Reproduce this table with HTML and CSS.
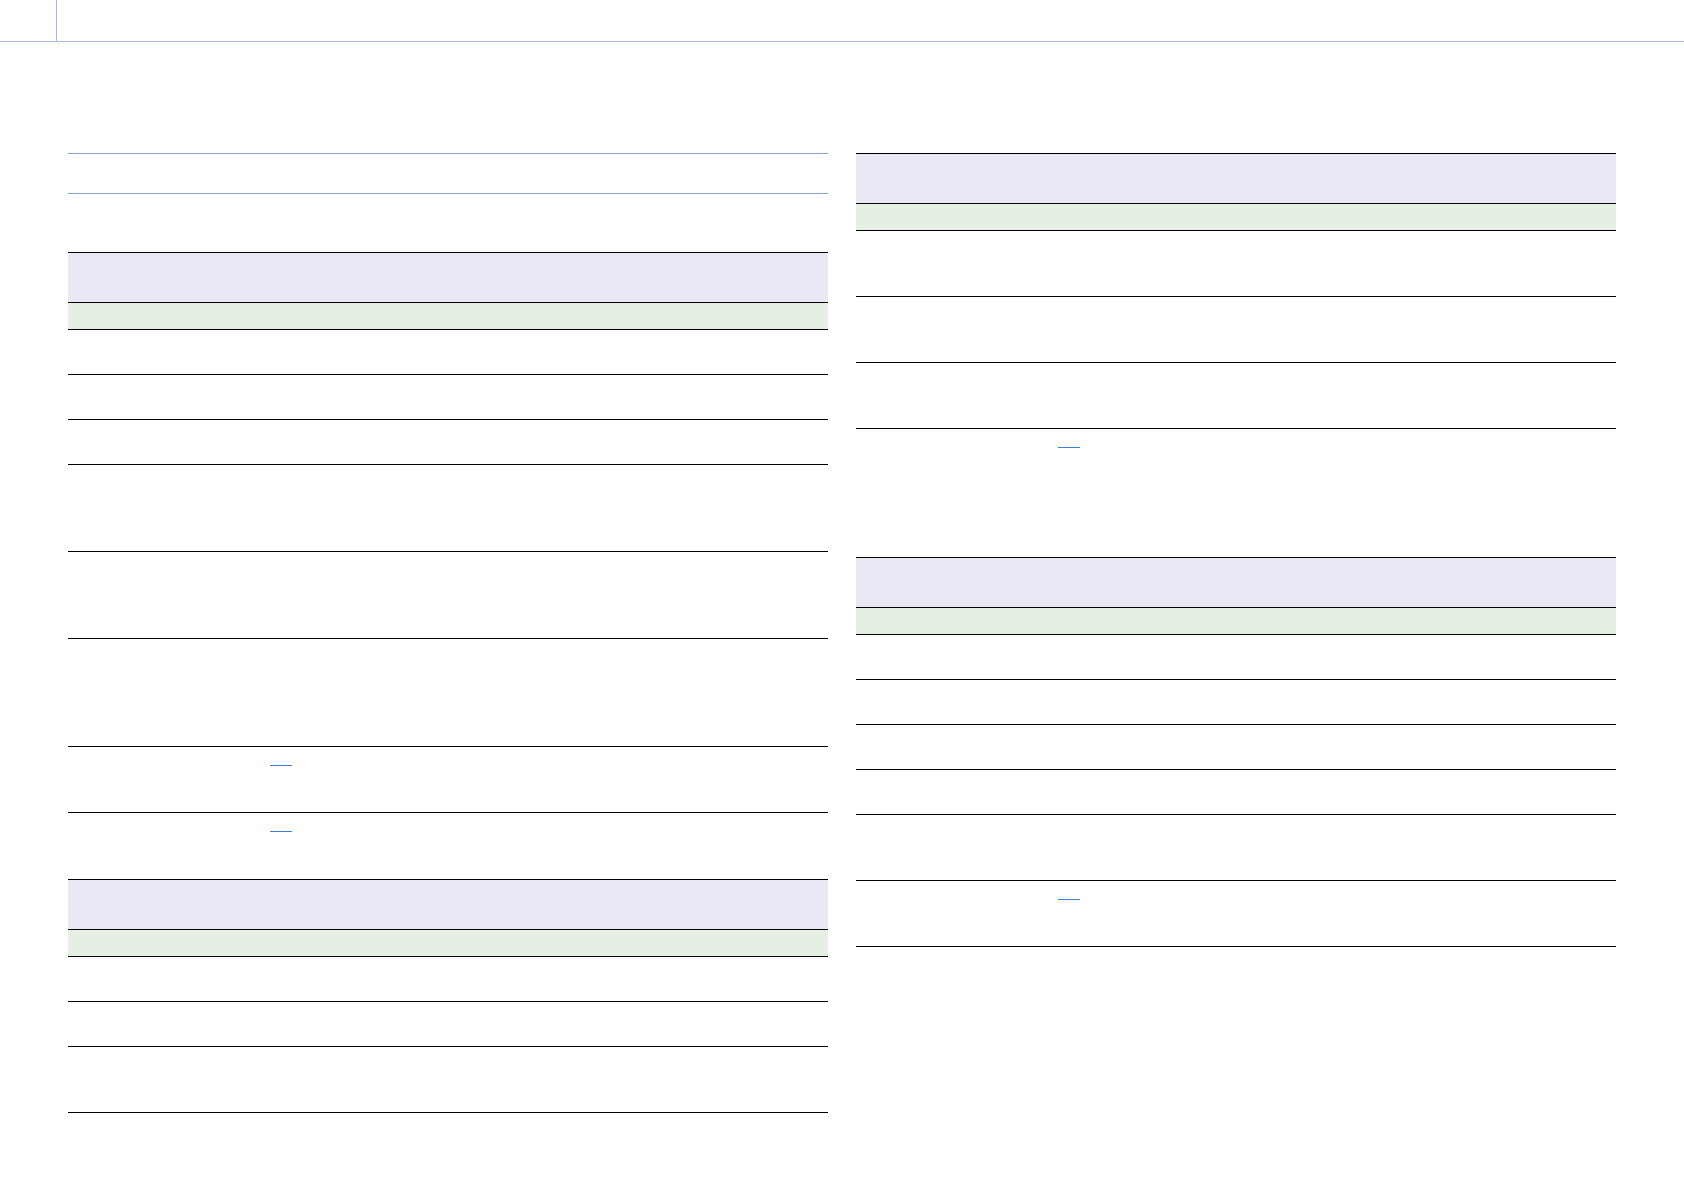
FILE: index.html
```html
<!DOCTYPE html>
<html lang="en">
<head>
<meta charset="utf-8">
<title>Page</title>
<link rel="stylesheet" href="styles.css">
</head>
<body>
<header class="topbar"><div class="tab"></div></header>
<main class="spread">
  <section class="col">
    <div class="title-block"></div>
    <div class="tbl first">
      <div class="row head"></div>
      <div class="row sub"></div>
      <div class="row h45"></div>
      <div class="row h45"></div>
      <div class="row h45"></div>
      <div class="row h87"></div>
      <div class="row h87"></div>
      <div class="row h108"></div>
      <div class="row h66"><div class="c1"></div><div class="c2"><a class="ref" href="#"></a></div></div>
      <div class="row h66 last"><div class="c1"></div><div class="c2"><a class="ref" href="#"></a></div></div>
    </div>
    <div class="tbl">
      <div class="row head"></div>
      <div class="row sub"></div>
      <div class="row h45"></div>
      <div class="row h45"></div>
      <div class="row h66"></div>
    </div>
  </section>
  <section class="col">
    <div class="tbl">
      <div class="row head"></div>
      <div class="row sub"></div>
      <div class="row h66"></div>
      <div class="row h66"></div>
      <div class="row h66"></div>
      <div class="row h66 last"><div class="c1"></div><div class="c2"><a class="ref" href="#"></a></div></div>
    </div>
    <div class="tbl gap-top">
      <div class="row head"></div>
      <div class="row sub"></div>
      <div class="row h45"></div>
      <div class="row h45"></div>
      <div class="row h45"></div>
      <div class="row h45"></div>
      <div class="row h66"></div>
      <div class="row h66"><div class="c1"></div><div class="c2"><a class="ref" href="#"></a></div></div>
    </div>
  </section>
</main>
</body>
</html>
```
FILE: styles.css
```css
* { box-sizing: border-box; }
html, body { margin: 0; padding: 0; background: #fff; }
body { font-family: "Liberation Sans", Arial, sans-serif; font-size: 13px; color: #000; width: 1684px; height: 1191px; overflow: hidden; }

.topbar {
  height: 42px;
  border-bottom: 1px solid #a9bbe6;
  display: flex;
}
.tab {
  width: 57px;
  border-right: 1px solid #a9bbe6;
}

.spread {
  display: flex;
  gap: 28px;
  padding: 111px 0 0 68px;
}
.col {
  width: 760px;
  display: flex;
  flex-direction: column;
}
.title-block {
  height: 41px;
  border-top: 1px solid #87a3d8;
  border-bottom: 1px solid #87a3d8;
  margin-bottom: 58px;
}

.tbl { border-top: 1px solid #000; }
.gap-top { margin-top: 62px; }

.row {
  display: grid;
  grid-template-columns: 202px 1fr;
  border-bottom: 1px solid #000;
}
.row.last { border-bottom: 0; }
.head { height: 50px; background: #e9e8f5; }
.sub { height: 27px; background: #e5efe4; }
.h45 { height: 45px; }
.h66 { height: 66px; }
.h87 { height: 87px; }
.h108 { height: 108px; }

.c2 { padding: 0; }
.ref {
  display: block;
  width: 22px;
  height: 19px;
  border-bottom: 1px solid #3d7fd6;
  text-decoration: none;
}
```
